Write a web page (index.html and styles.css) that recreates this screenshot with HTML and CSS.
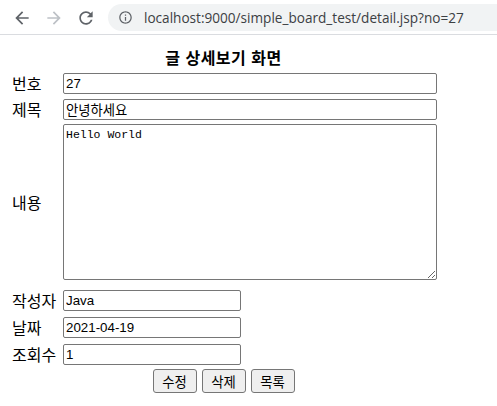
FILE: index.html
```html
<!DOCTYPE html>
<html lang="ko">
<head>
    <meta charset="UTF-8">
    <title>글 상세보기</title>
    <link rel="stylesheet" href="styles.css">
</head>
<body>
    <!-- browser toolbar -->
    <div class="toolbar">
        <span class="nav-btn">
            <svg viewBox="0 0 24 24" width="20" height="20"><path d="M20 11H7.83l5.59-5.59L12 4l-8 8 8 8 1.41-1.41L7.83 13H20v-2z"/></svg>
        </span>
        <span class="nav-btn nav-off">
            <svg viewBox="0 0 24 24" width="20" height="20"><path d="M4 11h12.17l-5.59-5.59L12 4l8 8-8 8-1.41-1.41L16.17 13H4v-2z"/></svg>
        </span>
        <span class="nav-btn">
            <svg viewBox="0 0 24 24" width="20" height="20"><path d="M17.65 6.35C16.2 4.9 14.21 4 12 4c-4.42 0-7.99 3.58-7.99 8s3.57 8 7.99 8c3.73 0 6.84-2.55 7.73-6h-2.08c-.82 2.33-3.04 4-5.65 4-3.31 0-6-2.69-6-6s2.69-6 6-6c1.66 0 3.14.69 4.22 1.78L13 11h7V4l-2.35 2.35z"/></svg>
        </span>
        <div class="omnibox">
            <svg class="info" viewBox="0 0 24 24" width="15" height="15"><path d="M11 7h2v2h-2zm0 4h2v6h-2zm1-9C6.48 2 2 6.48 2 12s4.48 10 10 10 10-4.48 10-10S17.52 2 12 2zm0 18c-4.41 0-8-3.59-8-8s3.59-8 8-8 8 3.59 8 8-3.59 8-8 8z"/></svg>
            <span class="url">localhost:9000/simple_board_test/detail.jsp?no=27</span>
        </div>
    </div>

    <div class="page">
        <div class="title">글 상세보기 화면</div>

        <div class="row">
            <label class="label">번호</label>
            <input type="text" class="field field-wide" value="27">
        </div>
        <div class="row">
            <label class="label">제목</label>
            <input type="text" class="field field-wide" value="안녕하세요">
        </div>
        <div class="row row-content">
            <label class="label">내용</label>
            <textarea class="content">Hello World</textarea>
        </div>
        <div class="row row-after-text">
            <label class="label">작성자</label>
            <input type="text" class="field" value="Java">
        </div>
        <div class="row row-small">
            <label class="label">날짜</label>
            <input type="text" class="field" value="2021-04-19">
        </div>
        <div class="row row-small">
            <label class="label">조회수</label>
            <input type="text" class="field" value="1">
        </div>

        <div class="actions">
            <button class="btn">수정</button>
            <button class="btn">삭제</button>
            <button class="btn">목록</button>
        </div>
    </div>
</body>
</html>
```

FILE: styles.css
```css
* { margin: 0; padding: 0; box-sizing: border-box; }

body {
    font-family: "Noto Sans CJK KR", "Noto Sans", sans-serif;
    font-size: 16px;
    color: #000;
    background: #fff;
    width: 497px;
    height: 406px;
    overflow: hidden;
}

/* toolbar */
.toolbar {
    height: 35px;
    border-bottom: 1px solid #dadce0;
    display: flex;
    align-items: center;
    padding-left: 6px;
    padding-top: 1px;
}

.nav-btn {
    width: 32px;
    display: flex;
    justify-content: center;
    fill: #5f6368;
}

.nav-off { fill: #bdc1c6; }

.omnibox {
    flex: 1;
    height: 27px;
    margin-left: 6px;
    border-radius: 14px 0 0 14px;
    background: #f1f3f4;
    display: flex;
    align-items: center;
    padding-left: 10px;
}

.info { fill: #5f6368; }

.url {
    margin-left: 11px;
    font-family: "Open Sans", sans-serif;
    font-size: 13.6px;
    color: #3c4043;
    white-space: nowrap;
}

/* detail form */
.page {
    padding: 11px 0 0 0;
}

.title {
    width: 431px;
    margin-left: 8px;
    text-align: center;
    font-weight: bold;
    line-height: 22px;
    letter-spacing: 0.5px;
}

.row {
    display: flex;
    align-items: center;
    padding-left: 12px;
    margin-top: 5px;
}

.row-content { margin-top: 4px; }
.row-after-text { margin-top: 10px; }
.row-small { margin-top: 6px; }

.label {
    width: 51px;
    line-height: 21px;
    white-space: nowrap;
}

.field {
    width: 178px;
    height: 21px;
    padding: 1px 2px;
    border: 1px solid #767676;
    border-radius: 2px;
    font-family: "Liberation Sans", "Noto Sans CJK KR", sans-serif;
    font-size: 13.33px;
    color: #000;
}

.field-wide { width: 374px; }

.content {
    width: 374px;
    height: 156px;
    padding: 2px;
    border: 1px solid #767676;
    border-radius: 2px;
    font-family: "Liberation Mono", monospace;
    font-size: 11.5px;
    line-height: 15px;
}

.actions {
    width: 431px;
    margin: 4px 0 0 8px;
    display: flex;
    justify-content: center;
    gap: 5px;
}

.btn {
    width: 44px;
    height: 24px;
    background: #efefef;
    border: 1px solid #767676;
    border-radius: 3px;
    font-family: "Noto Sans CJK KR", sans-serif;
    font-size: 13.33px;
    color: #000;
}
```
